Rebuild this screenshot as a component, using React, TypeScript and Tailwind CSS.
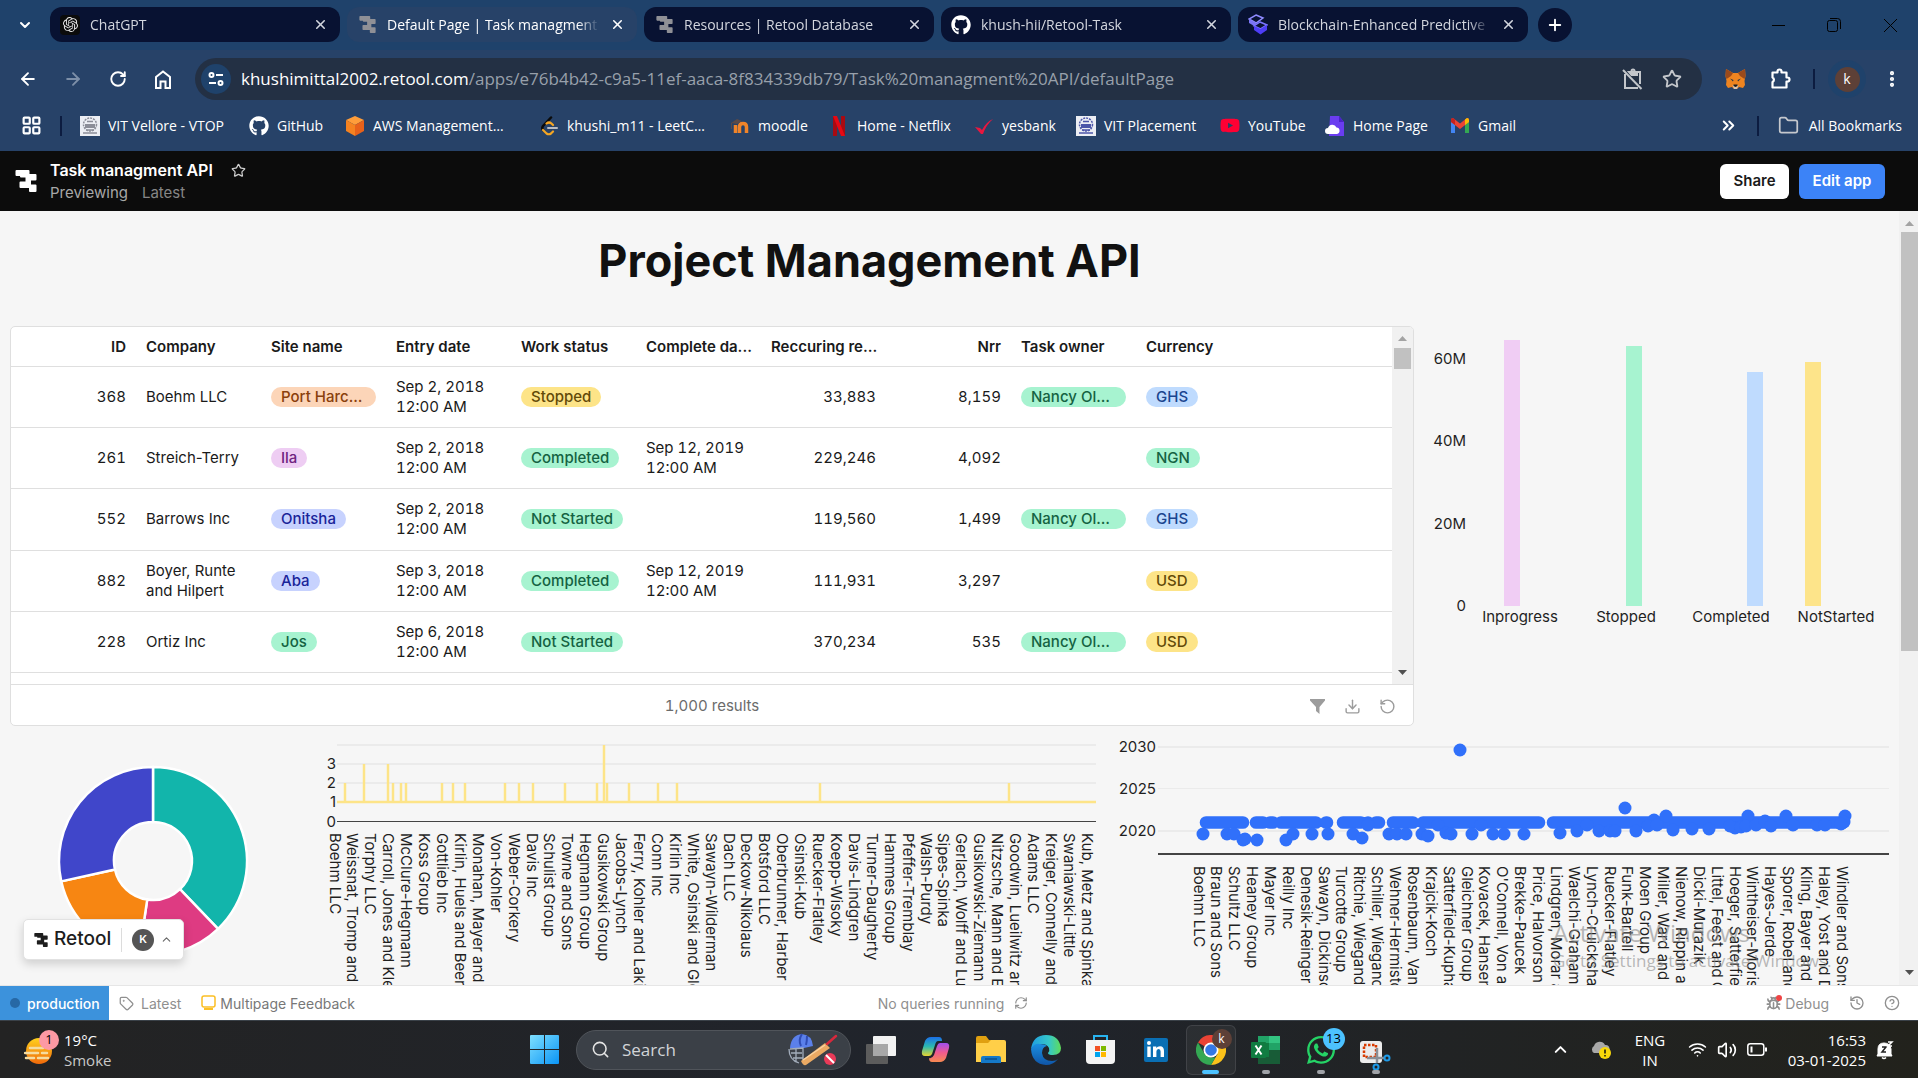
import React from "react";
import {
  ArrowLeft, ArrowRight, RotateCw, ChevronDown, ChevronUp, ChevronsRight, X, Plus, Star,
  Folder, Tag as TagIcon, RefreshCw, History, CircleQuestionMark, Bug, Search, Download, RotateCcw,
  Wifi, Volume2, EllipsisVertical, LayoutGrid,
} from "lucide-react";
import { FaGithub, FaYoutube, FaWhatsapp } from "react-icons/fa";
import { SiOpenai } from "react-icons/si";

const UI = "font-['Open_Sans','Noto_Sans',sans-serif]";
const INTER = "font-['Inter',sans-serif]";

function RetoolMark({ size, color }: { size: number; color: string }) {
  return (
    <svg width={size} height={size} viewBox="0 0 21 22" fill={color} aria-hidden="true">
      <path d="M1 0h12q1 0 1 1v3h6q1 0 1 1v4.500q0 1-1 1h-4.500v4H20q1 0 1 1V21q0 1-1 1h-5.500q-1 0-1-1v-3H5q-1 0-1-1v-4.500q0-1 1-1h5V7.500H5.500q-1 0-1-1V6H1Q0 6 0 5V1Q0 0 1 0z" />
    </svg>
  );
}

function CubeIcon() {
  return (
    <svg width="20" height="21" viewBox="0 0 20 21" aria-hidden="true">
      <path d="M8 1 15 4 8 9 1 5z" fill="none" stroke="#8f8bff" strokeWidth="1.500" />
      <path d="M1 5v4l7 4 0-4z" fill="#7a75f5" />
      <path d="M12 8 19 11 12.500 15 6 12z" fill="#0a1333" stroke="#7a75ff" strokeWidth="1.500" />
      <path d="M6 12v4l6.500 4.500L19 16v-5l-6.500 4z" fill="#4d3df5" />
    </svg>
  );
}

type TabInfo = { title: string; icon: React.ReactNode; active?: boolean };
const tabs: TabInfo[] = [
  {
    title: "ChatGPT",
    icon: (
      <span className="flex size-5 items-center justify-center rounded bg-[#0b0b0b] text-[#e8e8e8]">
        <SiOpenai size={15} />
      </span>
    ),
  },
  { title: "Default Page | Task managment API", icon: <RetoolMark size={17} color="#8f9096" />, active: true },
  { title: "Resources | Retool Database", icon: <RetoolMark size={17} color="#8f9096" /> },
  { title: "khush-hii/Retool-Task", icon: <FaGithub size={20} color="#fff" /> },
  { title: "Blockchain-Enhanced Predictive Maintenance", icon: <CubeIcon /> },
];

function TabStrip() {
  return (
    <div className="flex h-[50px] items-start bg-[#1f426b] pt-[7px]">
      <button aria-label="Search tabs" className="flex h-9 w-[50px] items-center justify-center text-white">
        <ChevronDown size={16} strokeWidth={3} />
      </button>
      <div className="flex gap-[7px]">
        {tabs.map((t) => (
          <div
            key={t.title}
            className={
              "flex h-[35px] w-[290px] items-center rounded-xl pl-2.5 pr-2.5 " +
              (t.active ? "bg-[#274268] text-white" : "bg-[#081232] text-[#d3d6de]")
            }
          >
            <span className="flex w-5 shrink-0 justify-center">{t.icon}</span>
            <span className="ml-2.5 min-w-0 flex-1 overflow-hidden whitespace-nowrap text-[14px] [mask-image:linear-gradient(to_right,black_90%,transparent)]">
              {t.title}
            </span>
            <button aria-label={"Close " + t.title} className="ml-2 flex size-5 items-center justify-center">
              <X size={15} strokeWidth={2.500} />
            </button>
          </div>
        ))}
      </div>
      <button aria-label="New tab" className="ml-2.5 mt-px flex size-[34px] items-center justify-center rounded-full bg-[#081232] text-white">
        <Plus size={18} strokeWidth={2.500} />
      </button>
      <div className="ml-auto flex h-9 items-center text-black">
        <button aria-label="Minimize" className="flex w-14 justify-center">
          <svg width="13" height="13"><path d="M0 6.500h13" stroke="currentColor" /></svg>
        </button>
        <button aria-label="Restore" className="flex w-14 justify-center">
          <svg width="14" height="14" fill="none" stroke="currentColor">
            <rect x="0.500" y="2.500" width="10" height="11" rx="2" />
            <path d="M3 .5h7.500a3 3 0 0 1 3 3V11" />
          </svg>
        </button>
        <button aria-label="Close window" className="flex w-14 justify-center">
          <svg width="13" height="13"><path d="M0 0l13 13M13 0L0 13" stroke="currentColor" /></svg>
        </button>
      </div>
    </div>
  );
}

function Fox() {
  return (
    <svg width="21" height="20" viewBox="0 0 21 20" aria-hidden="true">
      <path d="M1 0l7 4h5l7-4 .5 7-1 5 .5 4-2 3-4-1-2 2H9l-2-2-4 1-2-3 .5-4-1-5z" fill="#ee8420" />
      <path d="M1 0l7 4-2 3-4.500 3-1-3zM20 0l-7 4 2 3 4.500 3 1-3z" fill="#9a4a1c" />
      <path d="M5 9.500l3.500 1.500-.5 1.500zM16 9.500L12.500 11l.5 1.500z" fill="#233447" />
      <path d="M7.500 16h6L12 20H9z" fill="#d8c3b0" />
      <path d="M8.500 15.500h4V17l-2 1-2-1z" fill="#1b1b1b" />
    </svg>
  );
}

function Toolbar() {
  return (
    <div className="flex h-[58px] items-center bg-[#274268] text-white">
      <nav aria-label="Browser" className="flex w-[195px] shrink-0 items-center pl-[5px]">
        <button aria-label="Back" className="flex w-[45px] justify-center"><ArrowLeft size={20} strokeWidth={2.250} /></button>
        <button aria-label="Forward" className="flex w-[45px] justify-center text-[#7d8fa8]"><ArrowRight size={20} strokeWidth={2.250} /></button>
        <button aria-label="Reload" className="flex w-[45px] justify-center"><RotateCw size={18} strokeWidth={2.500} /></button>
        <button aria-label="Home" className="flex w-[45px] justify-center">
          <svg width="16" height="19" viewBox="0 0 16 19" fill="none" stroke="currentColor" strokeWidth="2">
            <path d="M1 7l7-5.500L15 7v11h-4.500v-6.500h-5V18H1z" />
          </svg>
        </button>
      </nav>
      <div className="flex h-[42px] min-w-0 flex-1 items-center rounded-full bg-[#233044] pl-1.5 pr-5">
        <button aria-label="Site information" className="flex size-[30px] items-center justify-center rounded-full bg-[#1f426b]">
          <svg width="16" height="16" fill="none" stroke="currentColor" strokeWidth="2">
            <circle cx="3.500" cy="4" r="2" /><path d="M8 4h7M1 12h7" /><circle cx="12.500" cy="12" r="2" />
          </svg>
        </button>
        <div className="ml-2.5 flex-1 truncate text-[17px]">
          khushimittal2002.retool.com
          <span className="text-[#98a0ab]">/apps/e76b4b42-c9a5-11ef-aaca-8f834339db79/Task%20managment%20API/defaultPage</span>
        </div>
        <div className="flex items-center gap-[19px] text-[#c3c6cb]">
          <button aria-label="Clipboard blocked">
            <svg width="21" height="22" viewBox="0 0 21 22" fill="none" stroke="currentColor" strokeWidth="2">
              <path d="M3 6v14h13M7 4h11v12" /><path d="M7 4h8v3H9.500z" fill="currentColor" /><circle cx="11" cy="3" r="1.500" /><path d="M1 2l18.500 19" />
            </svg>
          </button>
          <button aria-label="Bookmark this page"><Star size={20} strokeWidth={2.250} /></button>
        </div>
      </div>
      <div className="flex w-[216px] shrink-0 items-center pl-[22px]">
        <button aria-label="Wallet extension" className="flex w-[22px] justify-center"><Fox /></button>
        <button aria-label="Extensions" className="ml-6 flex w-[22px] justify-center">
          <svg width="22" height="22" viewBox="0 0 22 22" fill="none" stroke="currentColor" strokeWidth="2.200">
            <path d="M2.500 4.500H7.500V3.500a2 2 0 0 1 4 0v1h5v5h1a2 2 0 0 1 0 4h-1v6h-14v-5.500a2.500 2.500 0 0 0 0-4.500z" strokeLinejoin="round" />
          </svg>
        </button>
        <span className="ml-[21px] h-5 w-0.5 bg-[#0c1c40]" />
        <span className="ml-[13px] flex size-[38px] items-center justify-center rounded-full bg-[#1f426b]">
          <button aria-label="Profile" className="flex size-[25px] items-center justify-center rounded-full bg-[#5d4037] pb-0.5 text-[14px]">k</button>
        </span>
        <button aria-label="Menu" className="ml-4"><EllipsisVertical size={20} strokeWidth={3} /></button>
      </div>
    </div>
  );
}

function Crest({ tone }: { tone: string }) {
  return (
    <svg width="20" height="20" viewBox="0 0 20 20" aria-hidden="true">
      <rect width="20" height="20" fill="#eceef4" />
      <circle cx="10" cy="8.500" r="6.500" fill="none" stroke={tone} strokeWidth="1.500" strokeDasharray="2 1" />
      <path d="M5 8h10v4H5z" fill={tone} /><path d="M7 5.500h6M6 14h8M3 17h14" stroke={tone} strokeWidth="1.500" />
    </svg>
  );
}

const bookmarks: { label: string; width: string; icon: React.ReactNode }[] = [
  { label: "VIT Vellore - VTOP", width: "w-[169px]", icon: <Crest tone="#8b8d98" /> },
  { label: "GitHub", width: "w-24", icon: <FaGithub size={20} color="#fff" /> },
  {
    label: "AWS Management…",
    width: "w-[194px]",
    icon: (
      <svg width="20" height="20" viewBox="0 0 20 20">
        <path d="M10 0l9 4-9 5-9-5z" fill="#ff9d3a" /><path d="M1 4l9 5v11l-9-5z" fill="#f58220" /><path d="M19 4l-9 5v11l9-5z" fill="#e8611a" />
      </svg>
    ),
  },
  {
    label: "khushi_m11 - LeetC…",
    width: "w-[191px]",
    icon: (
      <svg width="20" height="20" viewBox="0 0 20 20" fill="none" strokeLinecap="round">
        <path d="M12 1.500L4 10q-1.500 2 0 4" stroke="#0b0b0b" strokeWidth="2.500" />
        <path d="M4 14l3.500 3.500q2.500 1.500 4.500 0l2-2M7.500 7.500Q10 5.500 12.500 7.500L14 9" stroke="#f5a623" strokeWidth="2.200" />
        <path d="M9 12h9" stroke="#b9bcc2" strokeWidth="2" />
      </svg>
    ),
  },
  {
    label: "moodle",
    width: "w-[99px]",
    icon: (
      <svg width="20" height="16" viewBox="0 0 20 16" fill="none">
        <path d="M5.500 15V7M9.500 15V9q0-3.500 3.500-3.500t3.500 3.500v6" stroke="#f0842a" strokeWidth="3.500" /><path d="M1 5l6-4 5 2-5 3z" fill="#5a4a48" /><path d="M1.500 5v6" stroke="#5a4a48" />
      </svg>
    ),
  },
  {
    label: "Home - Netflix",
    width: "w-[145px]",
    icon: (
      <svg width="20" height="20" viewBox="0 0 20 20">
        <path d="M4 0h4v20H4zM12 0h4v20h-4z" fill="#a80a12" /><path d="M4 0h4l8 20h-4z" fill="#e50914" />
      </svg>
    ),
  },
  {
    label: "yesbank",
    width: "w-[102px]",
    icon: (
      <svg width="20" height="18" viewBox="0 0 20 18"><path d="M1 10l5 1 2 2Q12 5 19 2 12 8 9 17H7z" fill="#e8173f" /></svg>
    ),
  },
  { label: "VIT Placement", width: "w-36", icon: <Crest tone="#4c56a8" /> },
  { label: "YouTube", width: "w-[105px]", icon: <FaYoutube size={21} color="#ff0033" /> },
  {
    label: "Home Page",
    width: "w-[125px]",
    icon: (
      <svg width="20" height="20" viewBox="0 0 20 20">
        <path d="M5 0h9l5 6v14H4z" fill="#6a3df0" /><path d="M14 0l5 6h-5z" fill="#4a22c8" />
        <path d="M3 18a3 3 0 0 1 0-6 4.500 4.500 0 0 1 8.500-.5 3.300 3.300 0 0 1 .5 6.500z" fill="#fff" />
      </svg>
    ),
  },
  {
    label: "Gmail",
    width: "w-[100px]",
    icon: (
      <svg width="20" height="15" viewBox="0 0 20 15">
        <path d="M1 2v13h4V6z" fill="#4285f4" /><path d="M19 2v13h-4V6z" fill="#34a853" />
        <path d="M1 2q0-2 2-2l7 5.500L17 0q2 0 2 2v2l-9 7-9-7z" fill="#ea4335" /><path d="M15 1.500L17 0q2 0 2 2v2l-4 3z" fill="#fbbc04" /><path d="M1 2q0-2 2-2l2 1.500V7L1 4z" fill="#c5221f" />
      </svg>
    ),
  },
];

function BookmarksBar() {
  return (
    <div className="flex h-[43px] items-center overflow-hidden bg-[#274268] pb-2 text-[14px] text-white">
      <button aria-label="Apps" className="ml-[21px]"><LayoutGrid size={21} strokeWidth={2.500} /></button>
      <span className="mx-[18px] h-5 w-0.5 shrink-0 bg-[#0c1c40]" />
      {bookmarks.map((b) => (
        <a key={b.label} href="#" className={"flex shrink-0 items-center gap-2 whitespace-nowrap " + b.width}>
          <span className="flex w-5 shrink-0 justify-center">{b.icon}</span>
          {b.label}
        </a>
      ))}
      <div className="ml-auto flex items-center pr-4">
        <button aria-label="More bookmarks"><ChevronsRight size={19} strokeWidth={2.500} /></button>
        <span className="mx-[19px] h-5 w-0.5 bg-[#0c1c40]" />
        <button className="flex items-center gap-2.5 whitespace-nowrap"><Folder size={21} color="#c5c8cd" />All Bookmarks</button>
      </div>
    </div>
  );
}

function AppHeader() {
  return (
    <header className={"flex h-[60px] shrink-0 items-center bg-[#0c0c0c] pl-[15px] pr-[33px] text-white " + INTER}>
      <RetoolMark size={22} color="#fff" />
      <div className="ml-[13px] pt-0.5">
        <div className="flex items-center gap-[18px] leading-[22px]">
          <h2 className="text-[16px] font-semibold">Task managment API</h2>
          <button aria-label="Favorite"><Star size={15} color="#cfcfcf" /></button>
        </div>
        <div className="flex gap-3.5 text-[15px] leading-6 text-[#a8a8a8]">
          <span>Previewing</span>
          <span className="text-[#868686]">Latest</span>
        </div>
      </div>
      <div className="ml-auto flex gap-2.5 text-[15px] font-semibold">
        <button className="h-[35px] w-[69px] rounded-md bg-white text-[#1a1a1a]">Share</button>
        <button className="h-[35px] w-[86px] rounded-md bg-[#3c83f7] text-white">Edit app</button>
      </div>
    </header>
  );
}

const tones = {
  orange: "bg-[#fcd5b8] text-[#8a3f0c]",
  purple: "bg-[#eecdf3] text-[#6f2380]",
  indigo: "bg-[#c7d2fe] text-[#1a2499]",
  green: "bg-[#a7f3d0] text-[#146242]",
  yellow: "bg-[#fde488] text-[#634a08]",
  blue: "bg-[#bfdbfe] text-[#1a458f]",
};
type Tone = keyof typeof tones;

function Pill({ tone, children }: { tone: Tone; children: React.ReactNode }) {
  return (
    <span className={"block w-fit max-w-full truncate rounded-full px-2.5 text-[15px] font-medium leading-5 " + tones[tone]}>{children}</span>
  );
}

type Row = {
  id: string; company: string; site: [string, Tone]; entry: string; status: [string, Tone];
  complete?: boolean; recurring: string; nrr: string; owner?: boolean; currency: [string, Tone];
};
const rows: Row[] = [
  { id: "368", company: "Boehm LLC", site: ["Port Harcourt", "orange"], entry: "Sep 2, 2018", status: ["Stopped", "yellow"], recurring: "33,883", nrr: "8,159", owner: true, currency: ["GHS", "blue"] },
  { id: "261", company: "Streich-Terry", site: ["Ila", "purple"], entry: "Sep 2, 2018", status: ["Completed", "green"], complete: true, recurring: "229,246", nrr: "4,092", currency: ["NGN", "green"] },
  { id: "552", company: "Barrows Inc", site: ["Onitsha", "indigo"], entry: "Sep 2, 2018", status: ["Not Started", "green"], recurring: "119,560", nrr: "1,499", owner: true, currency: ["GHS", "blue"] },
  { id: "882", company: "Boyer, Runte and Hilpert", site: ["Aba", "indigo"], entry: "Sep 3, 2018", status: ["Completed", "green"], complete: true, recurring: "111,931", nrr: "3,297", currency: ["USD", "yellow"] },
  { id: "228", company: "Ortiz Inc", site: ["Jos", "green"], entry: "Sep 6, 2018", status: ["Not Started", "green"], recurring: "370,234", nrr: "535", owner: true, currency: ["USD", "yellow"] },
];
const headings = ["ID", "Company", "Site name", "Entry date", "Work status", "Complete da...", "Reccuring re...", "Nrr", "Task owner", "Currency"];

function ScrollArrow({ up, dark }: { up?: boolean; dark?: boolean }) {
  return (
    <svg width="9" height="5" viewBox="0 0 9 5" fill={dark ? "#505050" : "#a3a3a3"} aria-hidden="true">
      <path d={up ? "M0 5L4.500 0L9 5z" : "M0 0L4.500 5L9 0z"} />
    </svg>
  );
}

function DataTable() {
  return (
    <section className="flex flex-col overflow-hidden rounded-[5px] border border-[#dfdfdf] bg-white text-[15px] leading-5 text-[#1a1a1a]">
      <div className="flex h-[357px] overflow-hidden">
        <div className="flex-1">
          <table className="w-full table-fixed border-collapse">
            <colgroup>
              {headings.map((h) => <col key={h} className="w-[125px]" />)}
              <col />
            </colgroup>
            <thead>
              <tr className="h-[39px] border-b border-[#dfdfdf] text-left">
                {headings.map((h) => (
                  <th key={h} scope="col" className={"whitespace-nowrap pl-2.5 pt-0.5 font-semibold " + (h === "ID" || h === "Nrr" ? "pr-2.5 text-right" : "")}>{h}</th>
                ))}
                <td />
              </tr>
            </thead>
            <tbody>
              {rows.map((r) => (
                <tr key={r.id} className="h-[61px] border-b border-[#dfdfdf] tabular-nums nth-3:h-[62px]">
                  <td className="px-2.5 text-right">{r.id}</td>
                  <td className="px-2.5 normal-nums">{r.company}</td>
                  <td className="px-2.5"><Pill tone={r.site[1]}>{r.site[0]}</Pill></td>
                  <td className="px-2.5">{r.entry}<br />12:00 AM</td>
                  <td className="px-2.5"><Pill tone={r.status[1]}>{r.status[0]}</Pill></td>
                  <td className="px-2.5">{r.complete && <>Sep 12, 2019<br />12:00 AM</>}</td>
                  <td className="px-2.5 text-right">{r.recurring}</td>
                  <td className="px-2.5 text-right">{r.nrr}</td>
                  <td className="px-2.5">{r.owner && <Pill tone="green">Nancy Oluwaseun</Pill>}</td>
                  <td className="px-2.5"><Pill tone={r.currency[1]}>{r.currency[0]}</Pill></td>
                  <td />
                </tr>
              ))}
            </tbody>
          </table>
        </div>
        <div className="flex w-[21px] flex-col items-center bg-[#f1f1f1] pb-[9px] pt-[9px]">
          <ScrollArrow up />
          <span className="mt-[7px] h-[21px] w-[17px] bg-[#c1c1c1]" />
          <span className="mt-auto"><ScrollArrow dark /></span>
        </div>
      </div>
      <div className="relative flex h-[41px] items-center justify-center border-t border-[#dfdfdf] pt-0.5 tabular-nums text-[#6b6b6b]">
        1,000 results
        <div className="absolute right-[17px] flex gap-[18px] text-[#9c9c9c]">
          <button aria-label="Filter">
            <svg width="17" height="17" viewBox="0 0 17 17" fill="currentColor"><path d="M1 1h15v1.500L10.500 9v7L7 13V9L1 2.500z" /></svg>
          </button>
          <button aria-label="Download"><Download size={17} /></button>
          <button aria-label="Refresh"><RotateCcw size={17} /></button>
        </div>
      </div>
    </section>
  );
}

const statusBars = [
  { label: "Inprogress", x: 90, h: 266, lx: 106, fill: "#f0cdf4" },
  { label: "Stopped", x: 212, h: 260, lx: 212, fill: "#a7f3d0" },
  { label: "Completed", x: 333, h: 234, lx: 317, fill: "#bfdbfe" },
  { label: "NotStarted", x: 391, h: 244, lx: 422, fill: "#fde48a" },
];

function StatusChart() {
  return (
    <svg viewBox="0 0 485 400" className="w-full text-[15px]" fill="#1f1f1f" role="img" aria-label="Totals by status">
      {["60M", "40M", "20M", "0"].map((t, i) => (
        <text key={t} x="52" y={38 + i * 82.300} textAnchor="end">{t}</text>
      ))}
      {statusBars.map((b) => (
        <g key={b.label}>
          <rect x={b.x} y={280 - b.h} width="16" height={b.h} fill={b.fill} />
          <text x={b.lx} y="296" textAnchor="middle">{b.label}</text>
        </g>
      ))}
    </svg>
  );
}

const slices = [
  { from: 0, to: 136.200, fill: "#12b5ab" },
  { from: 136.200, to: 188.500, fill: "#de3b82" },
  { from: 188.500, to: 257.500, fill: "#f78612" },
  { from: 257.500, to: 360, fill: "#4046ca" },
];
function arc(from: number, to: number) {
  const p = (deg: number, r: number) => {
    const a = (deg * Math.PI) / 180;
    return `${(153 + r * Math.sin(a)).toFixed(2)} ${(126 - r * Math.cos(a)).toFixed(2)}`;
  };
  const big = to - from > 180 ? 1 : 0;
  return `M${p(from, 94)}A94 94 0 ${big} 1 ${p(to, 94)}L${p(to, 39)}A39 39 0 ${big} 0 ${p(from, 39)}Z`;
}

function Donut() {
  return (
    <svg viewBox="0 0 320 250" className="w-full" role="img" aria-label="Share by category">
      {slices.map((s) => <path key={s.from} d={arc(s.from, s.to)} fill={s.fill} stroke="#fff" strokeWidth="2.500" />)}
    </svg>
  );
}

const lineLabels = [
  "Boehm LLC", "Weissnat, Tromp and", "Torphy LLC", "Carroll, Jones and Klein", "McClure-Hegmann", "Koss Group", "Gottlieb Inc",
  "Kirlin, Huels and Beer", "Monahan, Mayer and", "Von-Kohler", "Weber-Corkery", "Davis Inc", "Schulist Group", "Towne and Sons",
  "Hegmann Group", "Gusikowski Group", "Jacobs-Lynch", "Ferry, Kohler and Lakin", "Conn Inc", "Kirlin Inc", "White, Osinski and Glover",
  "Sawayn-Wilderman", "Dach LLC", "Deckow-Nikolaus", "Botsford LLC", "Oberbrunner, Harber", "Osinski-Kub", "Ruecker-Flatley",
  "Koepp-Wisoky", "Davis-Lindgren", "Turner-Daugherty", "Hammes Group", "Pfeffer-Tremblay", "Walsh-Purdy", "Sipes-Spinka",
  "Gerlach, Wolff and Luettgen", "Gusikowski-Ziemann", "Nitzsche, Mann and Ernser", "Goodwin, Lueilwitz and", "Adams LLC",
  "Kreiger, Connelly and", "Swaniawski-Little", "Kub, Metz and Spinka",
];
const spikes: [number, number][] = [
  [25, 2], [44, 3], [68, 3], [73, 2], [81, 2], [86, 2], [122, 2], [133, 2], [145, 2], [185, 2], [199, 2], [213, 2], [245, 2],
  [277, 2], [284, 4], [287, 2], [309, 2], [338, 2], [357, 2], [500, 2], [689, 2],
];

function VerticalLabels({ labels, x0, step, y }: { labels: string[]; x0: number; step: number; y: number }) {
  return (
    <>
      {labels.map((t, i) => {
        const x = x0 + i * step;
        return <text key={t} x={x} y={y} dominantBaseline="central" transform={`rotate(90 ${x} ${y})`}>{t}</text>;
      })}
    </>
  );
}

function LineChart() {
  return (
    <svg viewBox="0 0 785 250" className="w-full text-[15px]" fill="#1f1f1f" role="img" aria-label="Count by company">
      {[10, 29, 48].map((y) => <path key={y} d={`M17 ${y}H776`} stroke="#ebebeb" strokeWidth="2" />)}
      {["3", "2", "1", "0"].map((t, i) => <text key={t} x="16" y={34 + i * 19.200} textAnchor="end">{t}</text>)}
      <g stroke="#fde488" strokeWidth="2.500">
        <path d="M17 67H776" />
        {spikes.map(([x, v]) => <path key={x} d={`M${x} 67V${86 - v * 19}`} />)}
      </g>
      <path d="M17 86.500H776" stroke="#444" />
      <VerticalLabels labels={lineLabels} x0={15} step={17.910} y={98} />
    </svg>
  );
}

const scatterLabels = [
  "Boehm LLC", "Braun and Sons", "Schultz LLC", "Heaney Group", "Mayer Inc", "Reilly Inc", "Denesik-Reinger", "Sawayn, Dickinson",
  "Turcotte Group", "Ritchie, Wiegand", "Schiller, Wiegand", "Wehner-Hermiston", "Rosenbaum, Vandervort", "Krajcik-Koch", "Satterfield-Kuphal",
  "Gleichner Group", "Kovacek, Hansen", "O'Connell, Von and", "Brekke-Paucek", "Price, Halvorson", "Lindgren, Morar and", "Waelchi-Graham",
  "Lynch-Cruickshank", "Ruecker-Flatley", "Funk-Bartell", "Moen Group", "Miller, Ward and", "Nienow, Rippin and", "Dicki-Murazik",
  "Littel, Feest and Conn", "Hoeger, Satterfield", "Wintheiser-Morissette", "Hayes-Jerde", "Sporer, Robel and", "Kling, Bayer and",
  "Haley, Yost and Dare", "Windler and Sons",
];
const bands: [number, number][] = [[101, 138], [151, 158], [165, 168], [176, 211], [221, 222], [238, 256], [263, 263], [271, 274], [288, 308], [318, 434], [448, 738]];
const dots: [number, number][] = [
  [98, 99], [122, 99], [129, 99], [138, 105], [140, 104], [152, 105], [181, 105], [188, 99], [207, 99], [223, 99], [248, 99], [257, 103],
  [263, 90], [284, 99], [292, 99], [301, 99], [317, 99], [323, 101], [333, 90], [341, 98], [346, 99], [367, 99], [388, 99], [399, 99],
  [376, 90], [419, 99], [455, 98], [472, 96], [482, 90], [494, 96], [505, 96], [510, 96], [531, 96], [520, 73], [549, 85], [561, 81],
  [543, 91], [552, 90], [568, 95], [587, 94], [604, 94], [630, 93], [625, 91], [636, 92], [643, 81], [641, 91], [651, 90], [660, 86],
  [666, 91], [681, 81], [688, 90], [712, 90], [720, 90], [740, 81], [739, 87], [736, 89], [355, 15],
];

function ScatterChart() {
  return (
    <svg viewBox="0 0 794 250" className="w-full text-[15px]" fill="#1f1f1f" role="img" aria-label="Year by company">
      {[12, 53.500, 96].map((y) => <path key={y} d={`M53 ${y}H784`} stroke="#ebebeb" strokeWidth={y === 53.500 ? 1 : 2} />)}
      {["2030", "2025", "2020"].map((t, i) => <text key={t} x="51" y={17 + i * 42} textAnchor="end">{t}</text>)}
      <path d="M53 119H784" stroke="#444" strokeWidth="2" />
      <path d={bands.map(([a, b]) => `M${a} 87.500H${b}`).join("")} stroke="#3070fa" strokeWidth="12.600" strokeLinecap="round" />
      {dots.map(([x, y]) => <circle key={`${x}-${y}`} cx={x} cy={y} r="6.500" fill="#3070fa" />)}
      <VerticalLabels labels={scatterLabels} x0={94} step={17.870} y={131} />
    </svg>
  );
}

function Dashboard() {
  return (
    <main className={"relative flex min-h-0 flex-1 overflow-hidden bg-[#f6f6f6] " + INTER}>
      <div className="min-w-0 flex-1">
        <h1 className="mr-40 h-[115px] pt-5 text-center text-[45px] font-bold leading-[60px] text-[#111]">Project Management API</h1>
        <div className="grid grid-cols-[1404fr_485fr] pl-2.5">
          <DataTable />
          <StatusChart />
        </div>
        <div className="mt-[9px] grid grid-cols-[320fr_785fr_794fr]">
          <Donut />
          <LineChart />
          <ScatterChart />
        </div>
      </div>
      <div className="flex w-[19px] shrink-0 flex-col items-center bg-[#f1f1f1] pb-2.5 pl-0.5 pt-2.5">
        <ScrollArrow up />
        <span className="mt-1.5 h-[419px] w-full bg-[#c1c1c1]" />
        <span className="mt-auto"><ScrollArrow dark /></span>
      </div>
      <div className="absolute bottom-[25px] left-[23px] flex h-[41px] items-center rounded-[5px] border border-[#e2e2e2] bg-white px-2.5 shadow-[0_4px_10px_rgba(0,0,0,0.16)]">
        <RetoolMark size={14} color="#1d1d1d" />
        <span className="ml-1.5 text-[19px] font-medium text-[#1d1d1d]">Retool</span>
        <span className="mx-2.5 h-6 w-px bg-[#dcdcdc]" />
        <span className="flex size-[22px] items-center justify-center rounded-full bg-[#555] text-[11px] font-semibold text-white">K</span>
        <button aria-label="Expand" className="ml-1.5"><ChevronUp size={13} color="#666" /></button>
      </div>
      <div className={"pointer-events-none absolute bottom-3 right-[85px] w-[280px] whitespace-nowrap text-[#8a8a8a]/60 " + UI}>
        <div className="text-[24px] leading-8">Activate Windows</div>
        <div className="text-[17px] leading-6">Go to Settings to activate Windows.</div>
      </div>
    </main>
  );
}

function StatusBar() {
  return (
    <footer className={"grid h-[35px] shrink-0 grid-cols-[1fr_auto_1fr] items-center border-t border-[#e6e6e6] bg-white text-[14px] text-[#8f8f8f] " + INTER}>
      <div className="flex h-full items-center">
        <button className="flex h-full w-[109px] items-center gap-[7px] bg-[#3c92dc] pl-2.5 font-medium text-white">
          <span className="size-2.5 rounded-full bg-[#2768a5]" />production
        </button>
        <button className="ml-2.5 flex items-center gap-[7px]"><TagIcon size={15} />Latest</button>
        <button className="ml-5 flex items-center gap-1 text-[#777]">
          <svg width="15" height="16" viewBox="0 0 15 16" fill="none" stroke="#fbbf24" strokeWidth="1.500">
            <rect x="1" y="1" width="13" height="11" rx="2" /><path d="M3 14h9" strokeWidth="2" />
          </svg>
          Multipage Feedback
        </button>
      </div>
      <div className="mr-3 flex items-center gap-2.5">No queries running<RefreshCw size={14} /></div>
      <div className="flex items-center justify-end pr-[18px]">
        <button className="flex items-center gap-1">
          <span className="relative"><Bug size={15} strokeWidth={2.500} /><span className="absolute -right-px -top-px size-1.5 rounded-full bg-[#ef4444]" /></span>
          Debug
        </button>
        <button aria-label="History" className="ml-5"><History size={16} /></button>
        <button aria-label="Help" className="ml-[19px]"><CircleQuestionMark size={16} /></button>
      </div>
    </footer>
  );
}

function TaskIcon({ label, active, dot, children }: { label: string; active?: boolean; dot?: boolean; children: React.ReactNode }) {
  return (
    <button aria-label={label} className="relative flex h-full w-[55px] items-center justify-center">
      {active && <span className="absolute h-[50px] w-[50px] rounded-md border border-white/10 bg-white/5" />}
      <span className="relative flex">{children}</span>
      {active && <span className="absolute bottom-1 h-1 w-[17px] rounded-full bg-[#4cc2ff]" />}
      {dot && <span className="absolute bottom-1 h-1 w-2 rounded-full bg-[#a0a3a8]" />}
    </button>
  );
}

function Taskbar() {
  return (
    <div className={"grid h-[58px] shrink-0 grid-cols-[1fr_auto_1fr] items-center border-t border-[#3a4148] bg-linear-to-r from-[#232323] via-[#20242c] to-[#22221c] text-white " + UI}>
      <button aria-label="Weather" className="flex items-center gap-2 pl-6 text-left">
        <span className="relative flex size-8">
          <svg width="30" height="32" viewBox="0 0 30 32">
            <defs><linearGradient id="sun" x2="0" y2="1"><stop stopColor="#ffd21e" /><stop offset="1" stopColor="#f0690a" /></linearGradient></defs>
            <circle cx="15" cy="17" r="13" fill="url(#sun)" />
            <path d="M6 14h13M1 19h13M18 19h5M2 24h8M14 24h10" stroke="#f5dca0" strokeWidth="2.500" strokeLinecap="round" />
          </svg>
          <span className="absolute -top-1 left-[15px] flex size-5 items-center justify-center rounded-full bg-[#fd99a4] text-[13px] text-black">1</span>
        </span>
        <span className="block text-[15px] leading-5">19°C<br /><span className="text-[#c9c9c9]">Smoke</span></span>
      </button>
      <div className="flex h-[57px] items-center pl-0.5">
        <TaskIcon label="Start">
          <svg width="29" height="29" viewBox="0 0 29 29">
            <defs><linearGradient id="win" x2="1" y2="1"><stop stopColor="#7fe0ff" /><stop offset="1" stopColor="#0a94f5" /></linearGradient></defs>
            <path d="M0 1q0-1 1-1h13v14H0zM15 0h13q1 0 1 1v13H15zM0 15h14v14H1q-1 0-1-1zM15 15h14v13q0 1-1 1H15z" fill="url(#win)" />
          </svg>
        </TaskIcon>
        <label className="ml-1 mr-0.5 flex h-10 w-[275px] items-center rounded-full border border-[#50545a] bg-[#3b4047] pl-3.5 pr-3">
          <Search size={19} color="#e4e4e4" />
          <input placeholder="Search" aria-label="Search" className="ml-3 w-40 min-w-0 flex-1 bg-transparent text-[17px] outline-none placeholder:text-[#d2d4d7]" />
          <svg width="50" height="36" viewBox="0 0 50 36">
            <path d="M2 16Q3 3 14 2q10 1 11 12l-9 2-14 0z" fill="#5b80ea" /><path d="M14 2q-4 6-1 12M19 4q0 5-1 9" stroke="#2f4cb4" strokeWidth="2" fill="none" />
            <path d="M1 17q0 11 10 14M3 21h11M5 26h10M8 17v12M2 17l13-1v13" stroke="#a3adbb" strokeWidth="1.300" fill="none" />
            <path d="M13 29L37 11l5 5-24 17q-3 1-5-4z" fill="#eaa963" /><path d="M15 28l22-15" stroke="#f8d2a0" strokeWidth="1.500" /><path d="M39 12l9-8" stroke="#d8283c" strokeWidth="2.500" strokeLinecap="round" />
            <circle cx="42" cy="27" r="6" fill="#ea3a58" /><path d="M38 23l8 8" stroke="#fff" strokeWidth="2" />
          </svg>
        </label>
        <TaskIcon label="Task view">
          <svg width="30" height="28" viewBox="0 0 30 28"><rect y="8" width="22" height="20" rx="1" fill="#5c5c5c" /><rect x="7" width="23" height="20" rx="1" fill="#f2f2f2" /><path d="M7 8h15v12H7z" fill="#a8a8a8" /></svg>
        </TaskIcon>
        <TaskIcon label="Copilot">
          <svg width="29" height="27" viewBox="0 0 29 27">
            <defs>
              <linearGradient id="cpa" x2="0" y2="1"><stop stopColor="#1b6fe8" /><stop offset=".5" stopColor="#2cb9b0" /><stop offset="1" stopColor="#e8d530" /></linearGradient>
              <linearGradient id="cpb" x2="0" y2="1"><stop stopColor="#a050f0" /><stop offset=".5" stopColor="#f05a90" /><stop offset="1" stopColor="#f78a50" /></linearGradient>
            </defs>
            <path d="M10 1h8q3 0 3 4l-4 0q-2 0-3 4l-3 9q-1 2-3 2H4q-4 0-3-5L4 5q2-4 6-4z" fill="url(#cpa)" />
            <path d="M19 26h-8q-3 0-3-4 3 1 5-3l3-9q1-3 3-3h6q4 0 3 5l-3 10q-2 4-6 4z" fill="url(#cpb)" />
          </svg>
        </TaskIcon>
        <TaskIcon label="File Explorer">
          <svg width="30" height="27" viewBox="0 0 30 27"><path d="M0 2q0-2 2-2h8l3 4h4v6H0z" fill="#e0a010" /><path d="M0 7h12l3-3h13q2 0 2 2v20H0z" fill="#ffcf48" /><path d="M5 27v-5q0-2 2-2h16q2 0 2 2v5z" fill="#1579c8" /><path d="M9 23h12" stroke="#0b4f8c" strokeWidth="1.500" /></svg>
        </TaskIcon>
        <TaskIcon label="Edge">
          <svg width="30" height="30" viewBox="0 0 30 30">
            <defs>
              <linearGradient id="ega" x2="1"><stop stopColor="#1f9de0" /><stop offset=".6" stopColor="#35c7c9" /><stop offset="1" stopColor="#5fdc5a" /></linearGradient>
              <linearGradient id="egb" x2="0" y2="1"><stop stopColor="#1b8fe0" /><stop offset="1" stopColor="#0f55a8" /></linearGradient>
            </defs>
            <path d="M0 14Q2 0 15 0t15 13q0 7-8 7-5 0-5-2 2-2 1-5-2-4-7-4Q4 9 0 14z" fill="url(#ega)" />
            <path d="M0 14q3-6 9-5 5 0 7 2-5 1-5 7 1 8 10 8 4 0 6-2-5 6-12 6Q1 29 0 14z" fill="url(#egb)" />
          </svg>
        </TaskIcon>
        <TaskIcon label="Microsoft Store">
          <svg width="29" height="29" viewBox="0 0 29 29"><path d="M8 6V1h13v5" fill="none" stroke="#28b4f0" strokeWidth="2" /><path d="M0 5h29v20q0 4-4 4H4q-4 0-4-4z" fill="#f4f4f4" /><path d="M9 11h5v5H9z" fill="#f25022" /><path d="M15 11h5v5h-5z" fill="#7fba00" /><path d="M9 17h5v5H9z" fill="#00a4ef" /><path d="M15 17h5v5h-5z" fill="#ffb900" /></svg>
        </TaskIcon>
        <TaskIcon label="LinkedIn">
          <span className="flex size-6 items-center justify-center rounded-[2px] bg-[#0a6fb4]">
            <svg width="18" height="17" viewBox="0 0 18 17" fill="#fff"><circle cx="2" cy="2" r="2" /><path d="M.3 5.500h3.400V16H.3zM6 5.500h3.300V7q1-1.800 3.700-1.800 4 0 4 4.800v6h-3.400v-5.500q0-2.500-2-2.500-2.200 0-2.200 2.500V16H6z" /></svg>
          </span>
        </TaskIcon>
        <TaskIcon label="Chrome" active>
          <svg width="30" height="30" viewBox="0 0 30 30">
            <path d="M15 15L2 7.500A15 15 0 0 1 28 7.500H15z" fill="#ea4335" /><path d="M15 15v-7.500h13A15 15 0 0 1 15 30l6.500-11z" fill="#fbc21a" /><path d="M2 7.500l6.500 11.300L15 22.500h4.400L15 30A15 15 0 0 1 2 7.500z" fill="#34a853" />
            <circle cx="15" cy="15" r="7.500" fill="#fff" /><circle cx="15" cy="15" r="5.800" fill="#3478e5" />
          </svg>
          <span className="absolute -right-1.5 -top-1.5 flex size-5 items-center justify-center rounded-full bg-[#5d4037] text-[12px]">k</span>
        </TaskIcon>
        <TaskIcon label="Excel" dot>
          <svg width="29" height="28" viewBox="0 0 29 28"><path d="M7 0h22v28H7z" fill="#185c37" /><path d="M7 0h11v7H7zM7 7h11v7H7z" fill="#21a366" /><path d="M18 0h11v7H18z" fill="#33c481" /><path d="M18 7h11v7H18z" fill="#21a366" /><path d="M7 7h11v14H7z" fill="#107c41" /><rect y="6" width="15" height="16" rx="1" fill="#107c41" /><path d="M4.500 9.500l6 9M10.500 9.500l-6 9" stroke="#fff" strokeWidth="2" /></svg>
        </TaskIcon>
        <TaskIcon label="WhatsApp" dot>
          <FaWhatsapp size={32} color="#25d366" />
          <span className="absolute -right-2 -top-1.5 flex size-[22px] items-center justify-center rounded-full bg-[#4cc2ff] text-[13px] text-black">13</span>
        </TaskIcon>
        <TaskIcon label="Snipping Tool" dot>
          <svg width="31" height="30" viewBox="0 0 31 30" className="mt-3">
            <rect width="22" height="22" rx="3" fill="#ececec" /><rect x="4" y="4" width="12" height="12" fill="none" stroke="#d83b01" strokeWidth="2.500" strokeDasharray="2.500 1.500" />
            <path d="M17 7v15M7 17h17" stroke="#8a8f96" strokeWidth="2.500" /><circle cx="27" cy="17" r="2.500" fill="none" stroke="#1e9be8" strokeWidth="2" /><circle cx="16" cy="26" r="2.500" fill="none" stroke="#1e9be8" strokeWidth="2" />
          </svg>
        </TaskIcon>
      </div>
      <div className="flex items-center justify-end pr-6">
        <button aria-label="Show hidden icons"><ChevronUp size={19} strokeWidth={2.500} /></button>
        <button aria-label="OneDrive" className="ml-5">
          <svg width="22" height="20" viewBox="0 0 22 20"><path d="M4 13a4 4 0 0 1 0-7 6 6 0 0 1 11-1 4 4 0 0 1 1 8z" fill="#a8a8a8" /><circle cx="15" cy="13" r="6" fill="#f7d70a" /><path d="M15 9.500v4M15 15v1.500" stroke="#111" strokeWidth="1.500" /></svg>
        </button>
        <span className="ml-[22px] w-8 text-center text-[15px] leading-5">ENG<br />IN</span>
        <div className="ml-[22px] flex items-center gap-2.5">
          <Wifi size={19} />
          <Volume2 size={20} />
          <svg width="20" height="13" viewBox="0 0 20 13" fill="none" stroke="currentColor" strokeWidth="1.500"><rect x=".8" y=".8" width="16" height="11.400" rx="2.500" /><path d="M19 4.500v4" strokeWidth="2" /><path d="M3.500 3.500h2v6h-2z" fill="currentColor" stroke="none" /></svg>
        </div>
        <span className="ml-5 w-[79px] whitespace-nowrap text-right text-[15px] leading-5">16:53<br />03-01-2025</span>
        <svg width="18" height="20" viewBox="0 0 18 20" fill="none" stroke="currentColor" className="ml-2.5">
          <path d="M2 14V9q0-6 6-6t7 6v5l1 2H1z" fill="currentColor" /><path d="M6 17.500q2 2 4 0" strokeWidth="1.500" /><path d="M6 7h4L6 12h4" stroke="#222" strokeWidth="1.500" /><path d="M12 2h4l-4 4h4" strokeWidth="1.500" />
        </svg>
      </div>
    </div>
  );
}

export default function App() {
  return (
    <div className="flex h-screen flex-col overflow-hidden">
      <div className={"shrink-0 " + UI}>
        <TabStrip />
        <Toolbar />
        <BookmarksBar />
      </div>
      <AppHeader />
      <Dashboard />
      <StatusBar />
      <Taskbar />
    </div>
  );
}
